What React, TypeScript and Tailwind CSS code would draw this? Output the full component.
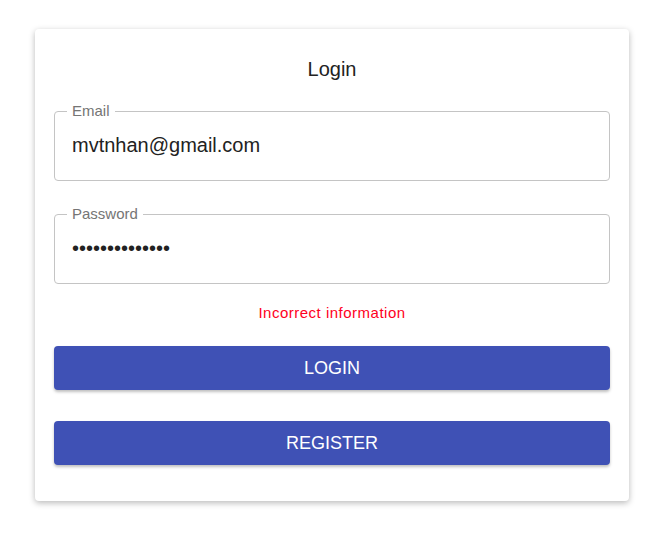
import React from 'react';

const font = { fontFamily: '"Liberation Sans", Arial, sans-serif' };

function Field({ label, type, value }: { label: string; type: string; value: string }) {
  return (
    <fieldset className="border border-[#c4c4c4] rounded-[4px] px-[17px] pb-[21px] pt-[14px] m-0 min-w-0">
      <legend className="ml-[-5px] px-[5px] text-[15px] leading-[16px] text-[#757575]">{label}</legend>
      <input
        type={type}
        defaultValue={value}
        readOnly
        className="w-full bg-transparent outline-none border-0 p-0 text-[20px] leading-[24px] text-[#222]"
        style={font}
      />
    </fieldset>
  );
}

export default function App() {
  return (
    <div className="min-h-[538px] bg-white pt-[29px] px-[35px]" style={font}>
      <div className="w-[594px] bg-white rounded-[4px] shadow-[0_2px_6px_rgba(0,0,0,0.28)] px-[19px] pt-[28px] pb-[36px] flex flex-col">
        <h1 className="text-center text-[20px] leading-[24px] text-[#222] font-normal">Login</h1>
        <div className="mt-[22px]">
          <Field label="Email" type="text" value="mvtnhan@gmail.com" />
        </div>
        <div className="mt-[25px]">
          <Field label="Password" type="password" value="12345678901234" />
        </div>
        <p className="mt-[21px] text-center text-[15px] leading-[16px] text-[#ff0022] tracking-[0.5px]">Incorrect information</p>
        <button className="mt-[25px] h-[44px] rounded-[4px] bg-[#3f51b5] text-white text-[18px] shadow-[0_2px_3px_rgba(0,0,0,0.25)]">
          LOGIN
        </button>
        <button className="mt-[31px] h-[44px] rounded-[4px] bg-[#3f51b5] text-white text-[18px] shadow-[0_2px_3px_rgba(0,0,0,0.25)]">
          REGISTER
        </button>
      </div>
    </div>
  );
}
